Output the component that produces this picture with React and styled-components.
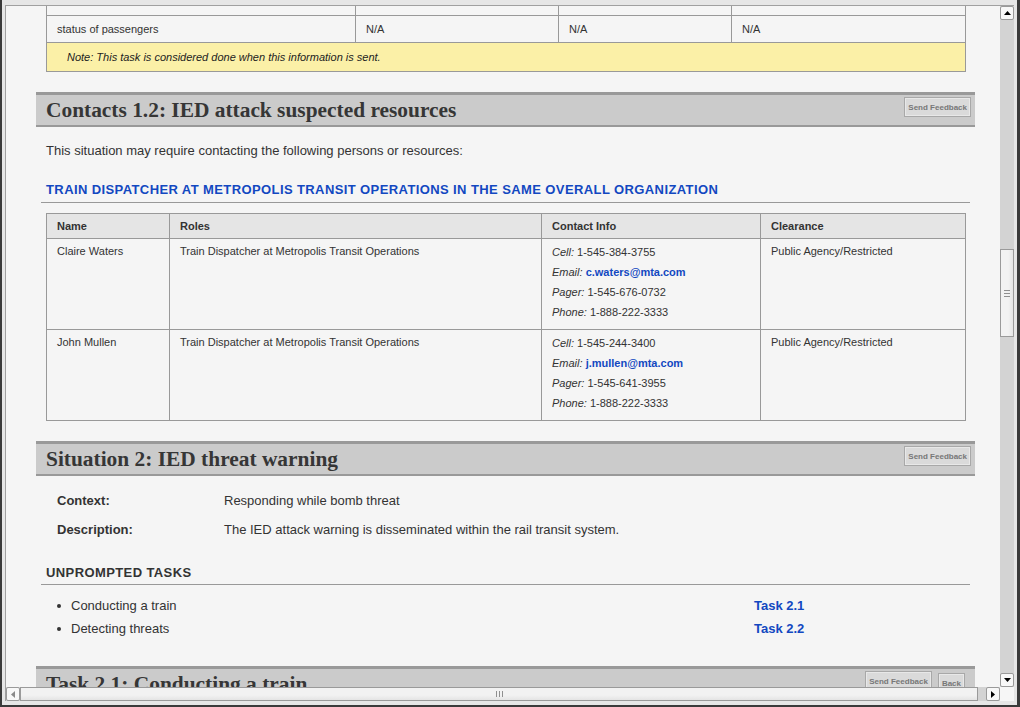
import React from "react";
import styled, { createGlobalStyle } from "styled-components";

// the reference is a scrolled browser view, so the page sits inside a fake window frame
const GlobalStyle = createGlobalStyle`
  html, body { margin: 0; padding: 0; background: #fff; }
  body { font-family: "Liberation Sans", Arial, sans-serif; color: #333; }
`;

const contacts = [
  {
    name: "Claire Waters",
    role: "Train Dispatcher at Metropolis Transit Operations",
    cell: "1-545-384-3755",
    email: "c.waters@mta.com",
    pager: "1-545-676-0732",
    phone: "1-888-222-3333",
    clearance: "Public Agency/Restricted",
  },
  {
    name: "John Mullen",
    role: "Train Dispatcher at Metropolis Transit Operations",
    cell: "1-545-244-3400",
    email: "j.mullen@mta.com",
    pager: "1-545-641-3955",
    phone: "1-888-222-3333",
    clearance: "Public Agency/Restricted",
  },
];

const tasks = [
  { label: "Conducting a train", link: "Task 2.1" },
  { label: "Detecting threats", link: "Task 2.2" },
];

function Arrow({ dir, muted }) {
  const pts = {
    up: "0,4 7,4 3.5,0",
    down: "0,0 7,0 3.5,4",
    left: "4,0 4,7 0,3.5",
    right: "0,0 0,7 4,3.5",
  }[dir];
  const vertical = dir === "up" || dir === "down";
  return (
    <ArrowBox>
      <svg
        width={vertical ? 7 : 4}
        height={vertical ? 4 : 7}
        viewBox={vertical ? "0 0 7 4" : "0 0 4 7"}
      >
        <polygon points={pts} fill={muted ? "#8a8a8a" : "#000"} />
      </svg>
    </ArrowBox>
  );
}

function Grip({ vertical }) {
  return vertical ? (
    <svg width="6" height="7" viewBox="0 0 6 7">
      <path d="M0 .5h6M0 3.5h6M0 6.5h6" stroke="#8f8f8f" strokeWidth="1" />
    </svg>
  ) : (
    <svg width="7" height="6" viewBox="0 0 7 6">
      <path d="M.5 0v6M3.5 0v6M6.5 0v6" stroke="#8f8f8f" strokeWidth="1" />
    </svg>
  );
}

function SectionBar({ title, back }) {
  return (
    <Bar>
      <BarTitle>{title}</BarTitle>
      <BarButtons>
        <SmallButton>Send Feedback</SmallButton>
        {back && <SmallButton $low>Back</SmallButton>}
      </BarButtons>
    </Bar>
  );
}

export default function App() {
  return (
    <>
      <GlobalStyle />
      <Frame>
        <Inner>
          <Viewport>
            <Content>
              <Section>
                <Body>
                  <Table>
                    <colgroup>
                      <col style={{ width: 309 }} />
                      <col style={{ width: 203 }} />
                      <col style={{ width: 173 }} />
                      <col style={{ width: 234 }} />
                    </colgroup>
                    <tbody>
                      <tr>
                        <Cell>&nbsp;</Cell>
                        <Cell />
                        <Cell />
                        <Cell />
                      </tr>
                      <tr>
                        <Cell>status of passengers</Cell>
                        <Cell>N/A</Cell>
                        <Cell>N/A</Cell>
                        <Cell>N/A</Cell>
                      </tr>
                      <tr>
                        <NoteCell colSpan={4}>
                          Note: This task is considered done when this information is sent.
                        </NoteCell>
                      </tr>
                    </tbody>
                  </Table>
                </Body>
              </Section>

              <Section>
                <SectionBar title="Contacts 1.2: IED attack suspected resources" />
                <Body>
                  <Intro>This situation may require contacting the following persons or resources:</Intro>
                  <GroupHeading>
                    Train Dispatcher at Metropolis Transit Operations in the same overall organization
                  </GroupHeading>
                  <Table $gap>
                    <colgroup>
                      <col style={{ width: 123 }} />
                      <col style={{ width: 372 }} />
                      <col style={{ width: 219 }} />
                      <col style={{ width: 205 }} />
                    </colgroup>
                    <thead>
                      <tr>
                        <HeadCell>Name</HeadCell>
                        <HeadCell>Roles</HeadCell>
                        <HeadCell>Contact Info</HeadCell>
                        <HeadCell>Clearance</HeadCell>
                      </tr>
                    </thead>
                    <tbody>
                      {contacts.map((c) => (
                        <tr key={c.name}>
                          <Cell $top>{c.name}</Cell>
                          <Cell $top>{c.role}</Cell>
                          <ContactCell>
                            <ContactLine>
                              <em>Cell:</em> {c.cell}
                            </ContactLine>
                            <ContactLine>
                              <em>Email:</em> <MailLink>{c.email}</MailLink>
                            </ContactLine>
                            <ContactLine>
                              <em>Pager:</em> {c.pager}
                            </ContactLine>
                            <ContactLine>
                              <em>Phone:</em> {c.phone}
                            </ContactLine>
                          </ContactCell>
                          <Cell $top>{c.clearance}</Cell>
                        </tr>
                      ))}
                    </tbody>
                  </Table>
                </Body>
              </Section>

              <Section>
                <SectionBar title="Situation 2: IED threat warning" />
                <Body>
                  <Facts>
                    <FactLabel>Context:</FactLabel>
                    <span>Responding while bomb threat</span>
                    <FactLabel>Description:</FactLabel>
                    <span>The IED attack warning is disseminated within the rail transit system.</span>
                  </Facts>
                  <TasksHeading>Unprompted Tasks</TasksHeading>
                  <TaskList>
                    {tasks.map((t) => (
                      <TaskItem key={t.link}>
                        <Dot />
                        <span>{t.label}</span>
                        <TaskLink>{t.link}</TaskLink>
                      </TaskItem>
                    ))}
                  </TaskList>
                </Body>
              </Section>

              <Section>
                <SectionBar title="Task 2.1: Conducting a train" back />
                <Body>
                  <Intro>&nbsp;</Intro>
                </Body>
              </Section>
            </Content>
          </Viewport>

          <VScroll>
            <Arrow dir="up" />
            <VThumb>
              <Grip vertical />
            </VThumb>
            <Arrow dir="down" />
          </VScroll>

          <HScroll>
            <Arrow dir="left" muted />
            <HThumb>
              <Grip />
            </HThumb>
            <Arrow dir="right" />
          </HScroll>
          <Corner />
        </Inner>
      </Frame>
    </>
  );
}

const Frame = styled.div`
  box-sizing: border-box;
  width: 1020px;
  height: 707px;
  background: #e6e6e6;
  border-left: 2px solid #3a3a3a;
  border-right: 3px solid #3a3a3a;
  border-bottom: 2px solid #3a3a3a;
  padding: 5px 3px 4px 3px;
`;

const Inner = styled.div`
  display: grid;
  grid-template-columns: 994px 14px;
  grid-template-rows: 681px 14px;
  border-top: 1px solid #a0a0a0;
  border-left: 1px solid #a0a0a0;
`;

const Viewport = styled.div`
  overflow: hidden;
  background: #f5f5f5;
`;

/* page is scrolled down a little: the first table row is cut at the top */
const Content = styled.div`
  margin-top: -18px;
  padding-left: 30px;
  width: 939px;
`;

const Section = styled.section`
  margin-bottom: 20px;
`;

const Bar = styled.div`
  display: flex;
  justify-content: space-between;
  align-items: flex-start;
  height: 30px;
  padding: 0 4px 0 10px;
  background: #cbcbcb;
  border-top: 3px solid #999;
  border-bottom: 2px solid #999;
`;

const BarTitle = styled.h2`
  margin: 0;
  font-family: "Liberation Serif", "Times New Roman", serif;
  font-size: 21.4px;
  font-weight: bold;
  line-height: 30px;
  color: #363636;
`;

const BarButtons = styled.div`
  display: flex;
  gap: 6px;
  margin-top: 2px;
`;

const SmallButton = styled.button`
  box-sizing: border-box;
  height: 20px;
  margin: ${(p) => (p.$low ? "2px 6px 0 0" : "0")};
  padding: 0 3px;
  background: #dadada;
  border: 1px solid #a8a8a8;
  box-shadow: inset 0 0 0 1px #e8e8e8;
  font-family: "Liberation Sans", Arial, sans-serif;
  font-size: 8px;
  font-weight: bold;
  color: #777;
`;

const Body = styled.div`
  padding: 0 10px;
`;

const Table = styled.table`
  width: 919px;
  margin-top: ${(p) => (p.$gap ? "10px" : "0")};
  table-layout: fixed;
  border-collapse: collapse;
  font-size: 11px;
  color: #333;
`;

const Cell = styled.td`
  padding: ${(p) => (p.$top ? "5px 10px" : "6px 10px")};
  border: 1px solid #999;
  line-height: 14px;
  vertical-align: top;
  text-align: left;
`;

const HeadCell = styled.th`
  padding: 5px 10px;
  border: 1px solid #999;
  background: #e5e5e5;
  line-height: 14px;
  text-align: left;
  font-weight: bold;
`;

const NoteCell = styled.td`
  padding: 7px 20px;
  border: 1px solid #999;
  background: #fbf0a7;
  line-height: 14px;
  font-style: italic;
  color: #222;
`;

const ContactCell = styled.td`
  padding: 3px 10px 7px;
  border: 1px solid #999;
  vertical-align: top;
`;

const ContactLine = styled.div`
  line-height: 20px;
`;

const MailLink = styled.a`
  font-weight: bold;
  color: #1248c1;
  text-decoration: none;
`;

const Intro = styled.p`
  margin: 15px 0 0;
  font-size: 13px;
  line-height: 18px;
`;

const GroupHeading = styled.h3`
  margin: 21px -5px 0;
  padding: 0 5px 3px;
  border-bottom: 1px solid #999;
  font-size: 13px;
  line-height: 18px;
  font-weight: bold;
  letter-spacing: 0.4px;
  text-transform: uppercase;
  color: #1248c1;
`;

const Facts = styled.div`
  display: grid;
  grid-template-columns: 167px 1fr;
  row-gap: 11px;
  margin-top: 16px;
  padding-left: 11px;
  font-size: 13px;
  line-height: 18px;
`;

const FactLabel = styled.span`
  font-weight: bold;
`;

const TasksHeading = styled.h3`
  margin: 25px -5px 0;
  padding: 0 5px 2px;
  border-bottom: 1px solid #999;
  font-size: 13px;
  line-height: 18px;
  font-weight: bold;
  letter-spacing: 0.4px;
  text-transform: uppercase;
`;

const TaskList = styled.ul`
  display: grid;
  row-gap: 5px;
  margin: 12px 0 0;
  padding: 0 0 8px 11px;
  list-style: none;
`;

const TaskItem = styled.li`
  display: grid;
  grid-template-columns: 14px 683px auto;
  align-items: center;
  font-size: 13px;
  line-height: 18px;
`;

const Dot = styled.span`
  width: 4px;
  height: 4px;
  border-radius: 50%;
  background: #333;
`;

const TaskLink = styled.a`
  font-weight: bold;
  color: #1248c1;
`;

const ArrowBox = styled.div`
  box-sizing: border-box;
  flex: 0 0 14px;
  width: 14px;
  height: 14px;
  display: flex;
  align-items: center;
  justify-content: center;
  background: #f8f8f8;
  border: 1px solid #9a9a9a;
  border-radius: 2px;
`;

const VScroll = styled.div`
  display: flex;
  flex-direction: column;
  background: #d3d3d3;
`;

const VThumb = styled.div`
  box-sizing: border-box;
  height: 88px;
  margin: 229px 0 auto;
  display: flex;
  align-items: center;
  justify-content: center;
  background: linear-gradient(to right, #f2f2f2 0%, #f2f2f2 60%, #e4e4e4 100%);
  border: 1px solid #9a9a9a;
`;

const HScroll = styled.div`
  display: flex;
  align-items: stretch;
  background: #d3d3d3;
`;

const HThumb = styled.div`
  box-sizing: border-box;
  flex: 0 0 958px;
  margin-right: auto;
  display: flex;
  align-items: center;
  justify-content: center;
  background: linear-gradient(#f2f2f2 0%, #f2f2f2 60%, #e4e4e4 100%);
  border: 1px solid #9a9a9a;
`;

const Corner = styled.div`
  background: #f6f6f6;
`;
